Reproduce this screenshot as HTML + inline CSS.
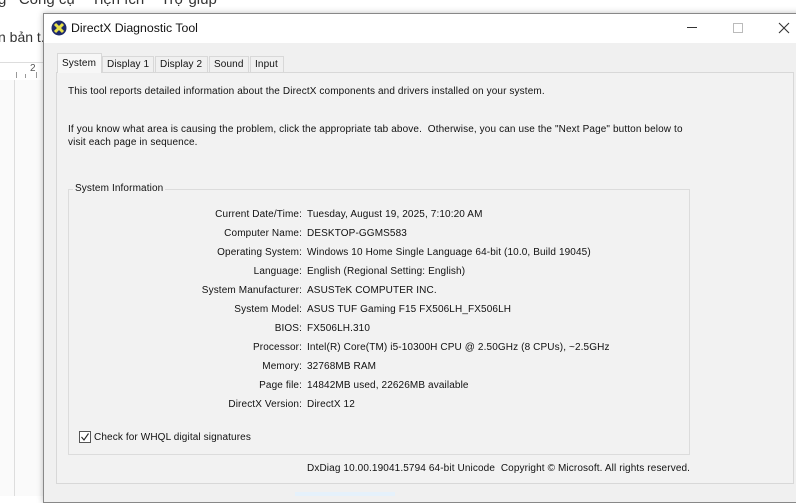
<!DOCTYPE html>
<html><head><style>
*{margin:0;padding:0;box-sizing:border-box}
body{width:796px;height:496px;overflow:hidden;background:#fff;font-family:"Liberation Sans",sans-serif;position:relative}
.abs{position:absolute;white-space:nowrap}
.t{font-size:10px;color:#111;letter-spacing:0.12px}
</style></head><body>
<div class="abs" style="left:-2px;top:-9px;font-size:15px;color:#333">g &nbsp;&nbsp;Công cụ &nbsp;&nbsp;&nbsp;Tiện ích &nbsp;&nbsp;&nbsp;Trợ giúp</div>
<div class="abs" style="left:-2px;top:29px;font-size:14px;color:#333">n bản t.</div>
<div class="abs" style="left:0;top:62px;width:44px;height:1px;background:#ddd"></div>
<div class="abs" style="left:30px;top:63px;font-size:10px;color:#555">2</div>
<div class="abs" style="left:16px;top:72px;width:1px;height:6px;background:#999"></div>
<div class="abs" style="left:25px;top:74px;width:1px;height:4px;background:#999"></div>
<div class="abs" style="left:36px;top:72px;width:1px;height:6px;background:#999"></div>
<div class="abs" style="left:0;top:80px;width:44px;height:416px;background:#fafafa"></div>
<div class="abs" style="left:14px;top:80px;width:1px;height:416px;background:#ddd"></div>
<div class="abs" style="left:43px;top:13px;width:760px;height:490px;border:1px solid #888;background:#f0f0f0;box-shadow:0 0 6px rgba(0,0,0,.25)"></div>
<div class="abs" style="left:44px;top:14px;width:752px;height:29px;background:#fff"></div>
<svg class="abs" style="left:51px;top:20px" width="16" height="16" viewBox="0 0 16 16"><circle cx="8" cy="8" r="7.5" fill="#1e2a6a"/><path d="M4 4L12 12M12 4L4 12" stroke="#e8e04a" stroke-width="3"/></svg>
<div class="abs" style="left:71px;top:21px;font-size:12.3px;color:#111">DirectX Diagnostic Tool</div>
<div class="abs" style="left:687px;top:27px;width:10px;height:1px;background:#333"></div>
<div class="abs" style="left:733px;top:23px;width:10px;height:10px;border:1px solid #bbb"></div>
<svg class="abs" style="left:778px;top:22px" width="12" height="12"><path d="M1 1L11 11M11 1L1 11" stroke="#333" stroke-width="1.1"/></svg>
<div class="abs" style="left:56px;top:72px;width:738px;height:412px;background:#f2f2f2;border:1px solid #d8d8d8"></div>
<div class="abs t" style="left:57px;top:53px;width:45px;height:20px;background:#f7f7f7;border:1px solid #d8d8d8;border-bottom:none;padding:4px 0 0 4px">System</div>
<div class="abs t" style="left:102px;top:56px;width:52px;height:16px;border:1px solid #d8d8d8;border-bottom:none;padding:2px 0 0 4px">Display 1</div>
<div class="abs t" style="left:155px;top:56px;width:53px;height:16px;border:1px solid #d8d8d8;border-bottom:none;padding:2px 0 0 4px">Display 2</div>
<div class="abs t" style="left:209px;top:56px;width:40px;height:16px;border:1px solid #d8d8d8;border-bottom:none;padding:2px 0 0 4px">Sound</div>
<div class="abs t" style="left:250px;top:56px;width:34px;height:16px;border:1px solid #d8d8d8;border-bottom:none;padding:2px 0 0 4px">Input</div>
<div class="abs t" style="left:68px;top:86px">This tool reports detailed information about the DirectX components and drivers installed on your system.</div>
<div class="abs t" style="left:68px;top:124px">If you know what area is causing the problem, click the appropriate tab above.&nbsp; Otherwise, you can use the "Next Page" button below to</div>
<div class="abs t" style="left:68px;top:137px">visit each page in sequence.</div>
<div class="abs" style="left:68px;top:189px;width:622px;height:266px;border:1px solid #dcdcdc"></div>
<div class="abs t" style="left:73px;top:183px;background:#f2f2f2;padding:0 2px">System Information</div>
<div class="abs t" style="left:100px;top:205px;width:202px;text-align:right;line-height:19px">Current Date/Time:<br>Computer Name:<br>Operating System:<br>Language:<br>System Manufacturer:<br>System Model:<br>BIOS:<br>Processor:<br>Memory:<br>Page file:<br>DirectX Version:</div>
<div class="abs t" style="left:307px;top:205px;line-height:19px">Tuesday, August 19, 2025, 7:10:20 AM<br>DESKTOP-GGMS583<br>Windows 10 Home Single Language 64-bit (10.0, Build 19045)<br>English (Regional Setting: English)<br>ASUSTeK COMPUTER INC.<br>ASUS TUF Gaming F15 FX506LH_FX506LH<br>FX506LH.310<br>Intel(R) Core(TM) i5-10300H CPU @ 2.50GHz (8 CPUs), ~2.5GHz<br>32768MB RAM<br>14842MB used, 22626MB available<br>DirectX 12</div>
<div class="abs" style="left:79px;top:431px;width:12px;height:12px;border:1px solid #555;background:#fff"></div>
<svg class="abs" style="left:80px;top:432px" width="10" height="10"><path d="M1.5 5L4 8L8.5 1.5" stroke="#222" fill="none" stroke-width="1.1"/></svg>
<div class="abs t" style="left:94px;top:432px">Check for WHQL digital signatures</div>
<div class="abs t" style="left:307px;top:463px">DxDiag 10.00.19041.5794 64-bit Unicode&nbsp; Copyright © Microsoft. All rights reserved.</div>
<div class="abs" style="left:295px;top:492px;width:100px;height:4px;background:#e5f1fb"></div>
</body></html>
